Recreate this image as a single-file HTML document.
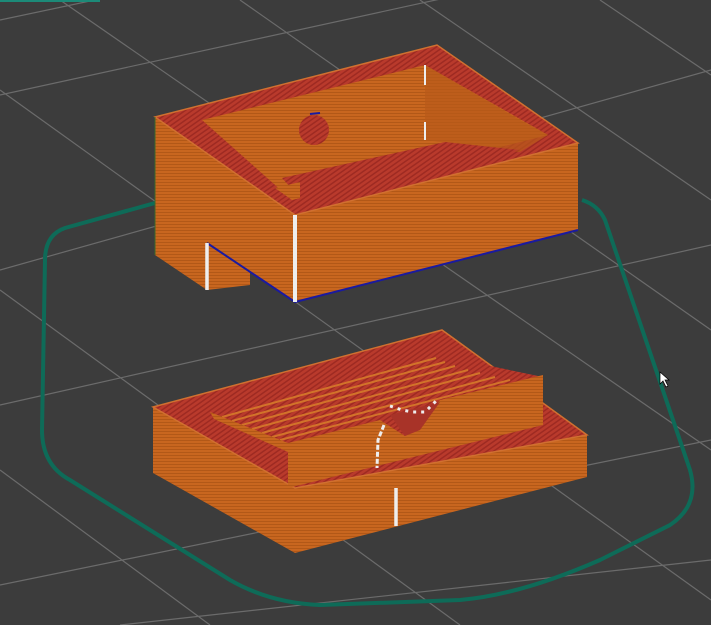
<!DOCTYPE html>
<html><head><style>
html,body{margin:0;padding:0;background:#3c3c3c;width:711px;height:625px;overflow:hidden}
svg{display:block}
</style></head><body>
<svg width="711" height="625" viewBox="0 0 711 625" xmlns="http://www.w3.org/2000/svg">
<defs>
<pattern id="lay" width="4" height="3" patternUnits="userSpaceOnUse">
<rect width="4" height="3" fill="#c8661f"/><rect y="2" width="4" height="1" fill="#b25817"/>
</pattern>
<pattern id="red" width="4" height="4" patternUnits="userSpaceOnUse" patternTransform="rotate(-35)">
<rect width="4" height="4" fill="#b93a2c"/><rect width="4" height="1.5" fill="#9e2a22"/>
</pattern>
</defs>
<rect width="711" height="625" fill="#3c3c3c"/>
<g stroke="#777" stroke-width="1.2" fill="none" opacity="0.8">
<line x1="0" y1="95" x2="711" y2="-60"/>
<line x1="0" y1="270" x2="711" y2="70"/>
<line x1="0" y1="405" x2="711" y2="245"/>
<line x1="0" y1="585" x2="711" y2="440"/>
<line x1="120" y1="625" x2="711" y2="560"/>
<line x1="0" y1="20" x2="711" y2="-130"/>
<line x1="240" y1="0" x2="711" y2="330"/>
<line x1="60" y1="0" x2="711" y2="450"/>
<line x1="0" y1="90" x2="711" y2="600"/>
<line x1="0" y1="290" x2="460" y2="625"/>
<line x1="0" y1="470" x2="210" y2="625"/>
<line x1="420" y1="0" x2="711" y2="200"/>
<line x1="600" y1="0" x2="711" y2="75"/>
</g>
<rect x="0" y="0" width="100" height="2" fill="#1c8a78"/>
<path d="M155,203 L65,228 Q45,235 45,260 L42,430 Q42,465 70,480 L230,580 Q270,603 320,605 L460,600 Q520,595 600,560 L670,525 Q700,505 690,470 L605,220 Q598,205 582,200" fill="none" stroke="#0e6b58" stroke-width="4"/>

<!-- bottom part -->
<polygon points="153,407 295,488 295,553 153,473" fill="url(#lay)"/>
<polygon points="295,488 587,435 587,477 295,553" fill="url(#lay)"/>
<polygon points="153,407 442,330 587,435 295,488" fill="url(#red)" stroke="#d07030" stroke-width="1.5"/>
<polygon points="210,412 428,353 543,377 288,443" fill="url(#red)"/>
<g stroke="#d2732a" stroke-width="2">
<line x1="222" y1="417" x2="436" y2="358"/>
<line x1="232" y1="421" x2="445" y2="362"/>
<line x1="242" y1="425" x2="455" y2="366"/>
<line x1="252" y1="429" x2="468" y2="370"/>
<line x1="262" y1="433" x2="480" y2="373"/>
<line x1="272" y1="437" x2="495" y2="377"/>
<line x1="280" y1="440" x2="510" y2="380"/>
</g>
<polygon points="210,412 288,443 288,452 214,419" fill="url(#lay)"/>
<polygon points="288,443 380,420 405,436 440,400 543,375 543,425 288,488" fill="url(#lay)"/>
<polygon points="390,415 440,402 420,430 405,436" fill="#a83328"/>
<polyline points="384,425 378,440 377,468" fill="none" stroke="#eee" stroke-width="3" stroke-dasharray="5,2"/>
<line x1="396" y1="488" x2="396" y2="526" stroke="#eee" stroke-width="3.5"/>
<polyline points="390,406 402,410 413,412 425,412 437,400" fill="none" stroke="#eee" stroke-width="3" stroke-dasharray="3,5"/>

<!-- top box -->
<polygon points="155,117 295,215 295,302 207,243 207,290 155,255" fill="url(#lay)"/>
<polygon points="207,243 250,272 250,285 207,290" fill="url(#lay)"/>
<polygon points="295,215 578,143 578,230 295,302" fill="url(#lay)"/>
<polyline points="207,243 295,302 578,230" fill="none" stroke="#1a1aa0" stroke-width="2"/>
<polygon points="155,117 437,45 578,143 295,215" fill="url(#red)" stroke="#d07030" stroke-width="1.5"/>
<polygon points="202,120 425,65 548,135 292,200" fill="url(#lay)"/>
<polygon points="425,65 520,120 548,135 520,152 425,140" fill="#b85a1a" opacity="0.7"/>
<polygon points="282,178 445,142 520,150 300,198" fill="url(#red)"/>
<polygon points="275,188 300,182 300,198 292,200" fill="url(#lay)"/>
<circle cx="314" cy="130" r="15" fill="url(#red)"/>
<line x1="310" y1="114" x2="320" y2="113" stroke="#1a1aa0" stroke-width="2"/>
<line x1="295" y1="215" x2="295" y2="302" stroke="#eee" stroke-width="4"/>
<line x1="207" y1="243" x2="207" y2="290" stroke="#eee" stroke-width="3.5"/>
<line x1="425" y1="65" x2="425" y2="85" stroke="#eee" stroke-width="2"/>
<line x1="425" y1="122" x2="425" y2="140" stroke="#eee" stroke-width="2"/>
<line x1="155" y1="117" x2="155" y2="255" stroke="#3a6a2a" stroke-width="1"/>

<!-- cursor -->
<path d="M660,372 L660,384 L663,381 L666,387 L668,386 L665,380 L669,380 Z" fill="#fff" stroke="#000" stroke-width="0.7"/>
</svg>
</body></html>
